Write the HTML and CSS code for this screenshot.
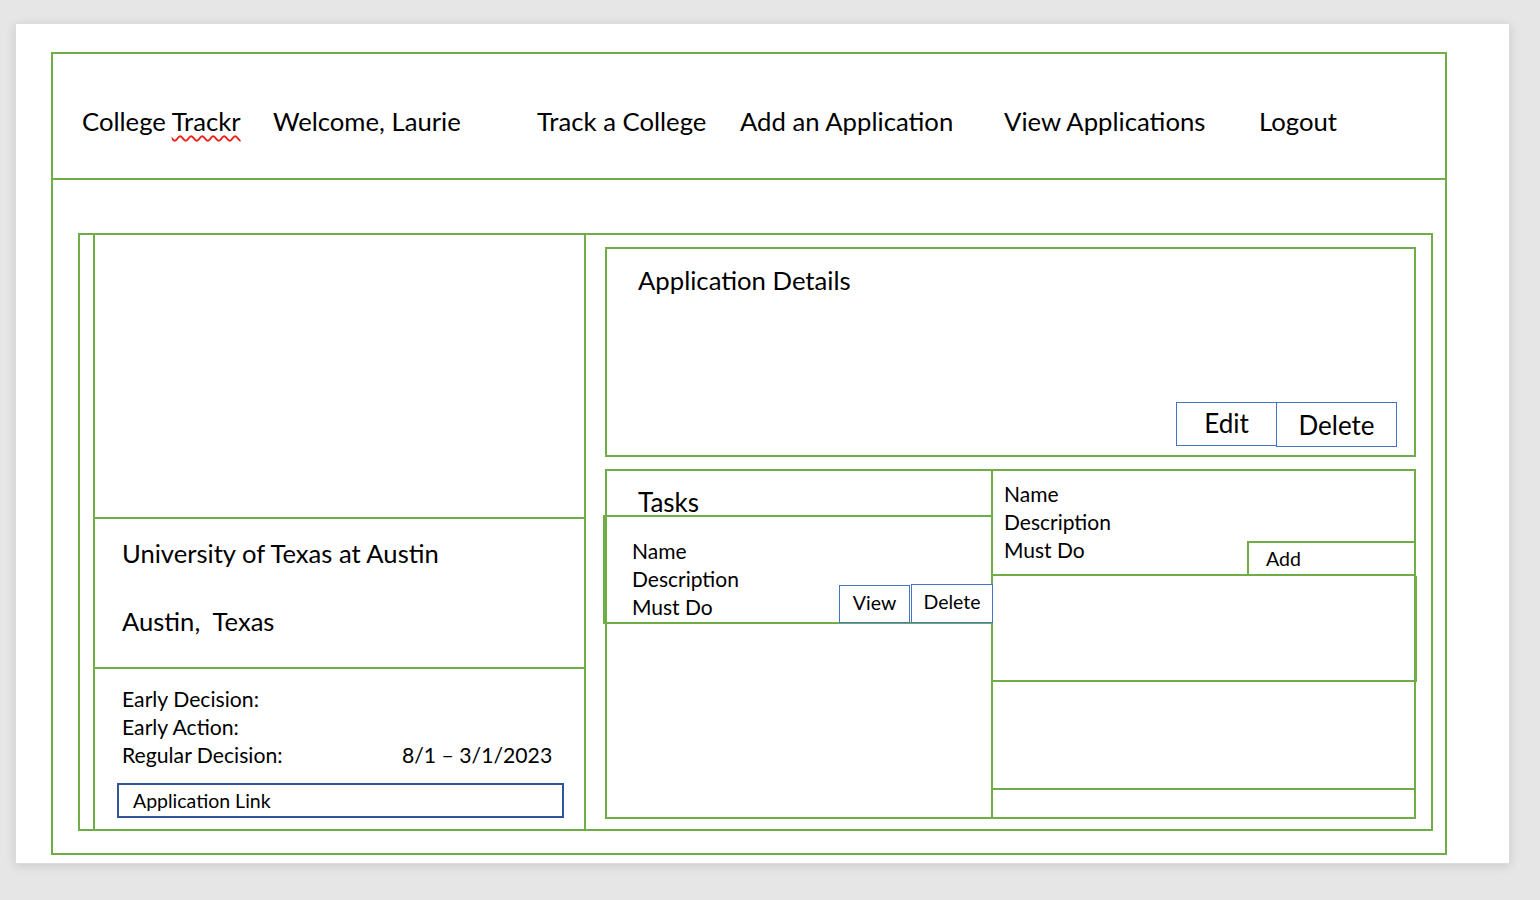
FILE: index.html
```html
<!DOCTYPE html>
<html lang="en">
<head>
<meta charset="utf-8">
<title>College Trackr – Application</title>
<link rel="stylesheet" href="styles.css">
</head>
<body>
<div class="page">
  <div class="frame">
    <header class="header">
      <nav class="nav">
        <span class="nav-item">College <span class="spell">Trackr</span></span>
        <span class="nav-item">Welcome, Laurie</span>
        <span class="nav-item">Track a College</span>
        <span class="nav-item">Add an Application</span>
        <span class="nav-item">View Applications</span>
        <span class="nav-item">Logout</span>
      </nav>
    </header>
    <main class="content">
      <div class="container">
        <div class="spacer"></div>
        <section class="college">
          <div class="college-image"></div>
          <div class="college-name">
            <p class="big name-line">University of Texas at Austin</p>
            <p class="big loc-line">Austin,&nbsp; Texas</p>
          </div>
          <div class="college-dates">
            <div class="date-row">Early Decision:</div>
            <div class="date-row">Early Action:</div>
            <div class="date-row"><span class="date-label">Regular Decision:</span><span>8/1 – 3/1/2023</span></div>
            <div class="app-link">Application Link</div>
          </div>
        </section>
        <section class="right">
          <div class="details">
            <h2 class="details-title">Application Details</h2>
            <div class="btn-row">
              <button class="btn btn-edit">Edit</button>
              <button class="btn btn-del">Delete</button>
            </div>
          </div>
          <div class="tasks">
            <div class="tasks-left">
              <h3 class="tasks-title">Tasks</h3>
              <div class="task-card">
                <div class="task-fields">
                  <div>Name</div>
                  <div>Description</div>
                  <div>Must Do</div>
                </div>
                <div class="task-btns">
                  <button class="sbtn sbtn-view">View</button>
                  <button class="sbtn sbtn-del">Delete</button>
                </div>
              </div>
            </div>
            <div class="tasks-right">
              <div class="new-task">
                <div class="task-fields new-fields">
                  <div>Name</div>
                  <div>Description</div>
                  <div>Must Do</div>
                </div>
                <div class="add-box">Add</div>
              </div>
              <div class="slot slot-b"></div>
              <div class="slot slot-c"></div>
              <div class="slot slot-d"></div>
            </div>
          </div>
        </section>
      </div>
    </main>
  </div>
</div>
</body>
</html>
```

FILE: styles.css
```css
* { box-sizing: border-box; }

html, body {
  margin: 0;
  padding: 0;
}

body {
  background: #e6e6e6;
  font-family: Lato, "Liberation Sans", sans-serif;
  color: #000;
  min-height: 900px;
}

.page {
  margin: 23px 0 0 15px;
  width: 1495px;
  height: 841px;
  background: #fff;
  border: 1px solid #dcdcdc;
  box-shadow: 0 2px 10px rgba(0, 0, 0, 0.12);
  padding: 28px 0 0 35px;
}

.frame {
  width: 1396px;
  height: 803px;
  border: 2px solid #70ad47;
  display: flex;
  flex-direction: column;
}

.header {
  height: 126px;
  border-bottom: 2px solid #70ad47;
  padding: 51px 0 0 29px;
}

.nav {
  display: grid;
  grid-template-columns: 191px 264px 203px 264px 255px auto;
  font-size: 25.7px;
  line-height: 32px;
}

.nav-item { white-space: nowrap; }

.spell {
  text-decoration: underline wavy #e8231b;
  text-decoration-thickness: 1.5px;
  text-underline-offset: 4px;
  padding-right: 3px;
}

.content {
  flex: 1;
  padding: 53px 0 0 25px;
}

.container {
  width: 1355px;
  height: 598px;
  border: 2px solid #70ad47;
  display: flex;
}

.spacer { width: 13px; }

.college {
  width: 493px;
  border-left: 2px solid #70ad47;
  border-right: 2px solid #70ad47;
  display: flex;
  flex-direction: column;
}

.college-image {
  height: 284px;
  border-bottom: 2px solid #70ad47;
}

.college-name {
  height: 150px;
  border-bottom: 2px solid #70ad47;
  padding: 18px 0 0 27px;
}

.big {
  margin: 0;
  font-size: 25.6px;
  line-height: 32px;
}

.loc-line { margin-top: 36px; }

.college-dates {
  flex: 1;
  padding: 16px 0 0 27px;
  font-size: 21.2px;
  line-height: 28px;
}

.date-row { display: flex; }

.date-label { width: 280px; }

.app-link {
  margin: 14px 0 0 -5px;
  width: 447px;
  height: 35px;
  border: 2px solid #2f5597;
  padding: 2px 0 0 14px;
  font-size: 19.5px;
  line-height: 28px;
}

.right {
  flex: 1;
  display: flex;
  flex-direction: column;
  gap: 12px;
  padding: 12px 15px 10px 19px;
}

.details {
  height: 210px;
  border: 2px solid #70ad47;
  display: flex;
  flex-direction: column;
  padding: 15px 17px 8px 31px;
}

.details-title {
  margin: 0;
  font-weight: 400;
  font-size: 25.7px;
  line-height: 32px;
}

.btn-row {
  margin-top: auto;
  display: flex;
  justify-content: flex-end;
  align-items: flex-start;
}

.btn {
  font-family: inherit;
  font-size: 26px;
  line-height: 32px;
  color: #000;
  background: #fff;
  border: 1px solid #4472c4;
  border-radius: 0;
  padding: 0;
  margin: 0;
  text-align: center;
}

.btn-edit { width: 101px; height: 44px; padding-bottom: 2px; }
.btn-del { width: 121px; height: 45px; margin-left: -1px; }

.tasks {
  flex: 1;
  border: 2px solid #70ad47;
  display: grid;
  grid-template-columns: 386px 1fr;
}

.tasks-left {
  border-right: 2px solid #70ad47;
  display: flex;
  flex-direction: column;
}

.tasks-title {
  margin: 0;
  height: 44px;
  padding: 15px 0 0 31px;
  font-weight: 400;
  font-size: 26px;
  line-height: 32px;
}

.task-card {
  height: 109px;
  margin: 0 -2px 0 -4px;
  border: 2px solid #70ad47;
  display: flex;
  justify-content: space-between;
  align-items: flex-end;
}

.task-fields {
  align-self: flex-start;
  padding: 20px 0 0 27px;
  font-size: 21px;
  line-height: 28px;
}

.task-btns {
  display: flex;
  gap: 1px;
  margin: 0 -2px -1px 0;
  align-items: flex-end;
}

.sbtn {
  font-family: inherit;
  font-size: 19.5px;
  line-height: 28px;
  color: #000;
  background: #fff;
  border: 1px solid #4472c4;
  border-radius: 0;
  padding: 0 0 2px;
  margin: 0;
  text-align: center;
}

.sbtn-view { width: 71px; height: 38px; }
.sbtn-del { width: 82px; height: 39px; padding-bottom: 4px; }

.tasks-right {
  display: flex;
  flex-direction: column;
}

.new-task {
  height: 105px;
  border-bottom: 2px solid #70ad47;
  display: flex;
  justify-content: space-between;
  align-items: flex-end;
}

.new-fields { padding: 9px 0 0 11px; }

.add-box {
  width: 169px;
  height: 33px;
  margin-right: -2px;
  border-top: 2px solid #70ad47;
  border-left: 2px solid #70ad47;
  border-right: 2px solid #70ad47;
  padding: 2px 0 0 17px;
  font-size: 19.5px;
  line-height: 28px;
}

.slot { border-bottom: 2px solid #70ad47; }
.slot-b { height: 106px; margin-right: -3px; border-right: 2px solid #70ad47; }
.slot-c { height: 108px; }
.slot-d { flex: 1; border-bottom: 0; }
```
